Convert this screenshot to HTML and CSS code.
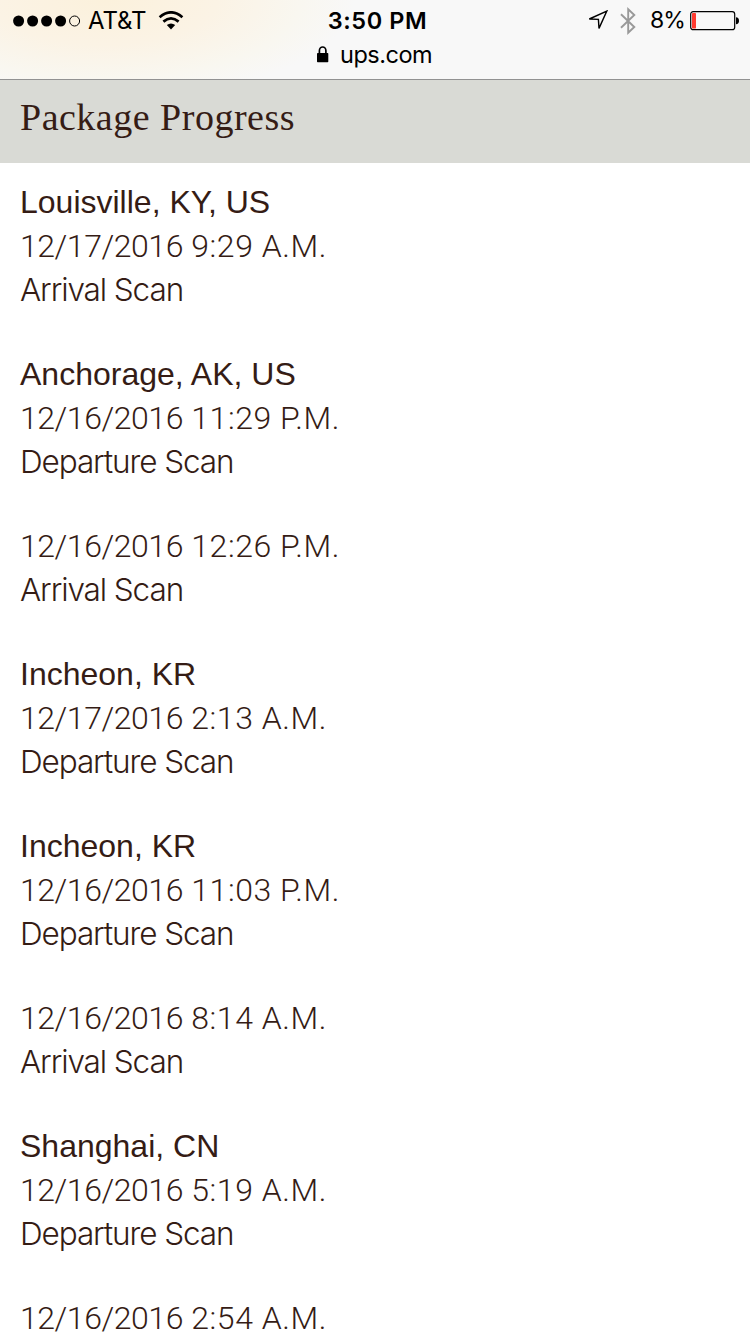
FILE: index.html
```html
<!DOCTYPE html>
<html lang="en">
<head>
<meta charset="utf-8">
<title>Package Progress</title>
<link rel="stylesheet" href="styles.css">
</head>
<body>
<header class="browser">
  <div class="status">
    <div class="carrier">
      <svg class="signal" width="68" height="12" viewBox="0 0 68 12"><circle cx="5.6" cy="6" r="5.5"/><circle cx="19.6" cy="6" r="5.5"/><circle cx="33.6" cy="6" r="5.5"/><circle cx="47.6" cy="6" r="5.5"/><circle cx="61.6" cy="6" r="5" fill="none" stroke="#000"/></svg>
      <span class="network">AT&amp;T</span>
      <svg class="wifi" width="26" height="19" viewBox="0 0 26 19"><g fill="none" stroke="#000" stroke-width="2.7"><path d="M1.6 6.2Q13-3.5 24.4 6.2"/><path d="M5.4 10.6Q13 4.2 20.6 10.6"/></g><path d="M8.8 14.1Q13 10.8 17.2 14.1L13 18.4Z"/></svg>
    </div>
    <div class="time">3:50 PM</div>
    <div class="indicators">
      <svg class="location" width="21" height="21" viewBox="0 0 21 21"><path d="M1.3 9L18.8 1.1L11 18.4L10.4 9.4Z" fill="none" stroke="#000" stroke-width="1.4"/></svg>
      <svg class="bluetooth" width="17" height="28" viewBox="0 0 17 28"><path d="M1 7.2L14.3 20L8.2 25.7V2.3L14.3 8L1 20.8" fill="none" stroke="#999" stroke-width="1.9"/></svg>
      <span class="percent">8%</span>
      <svg class="battery" width="50" height="20" viewBox="0 0 50 20"><rect x=".7" y=".7" width="44" height="18" rx="2.5" fill="none" stroke="#000" stroke-width="1.2"/><rect x="2" y="2" width="4" height="15.4" rx=".7" fill="#ff3b30"/><path d="M46 6.2Q49 6.4 49 9.7T46 13.2Z"/></svg>
    </div>
  </div>
  <div class="address">
    <svg class="lock" width="12" height="17" viewBox="0 0 12 17"><rect x="0" y="7" width="11.3" height="9.3" rx=".7"/><path d="M2.4 8V4.7a3.25 3.7 0 0 1 6.5 0V8" fill="none" stroke="#000" stroke-width="1.7"/></svg>
    <span class="domain">ups.com</span>
  </div>
</header>
<h1 class="title"><span>Package Progress</span></h1>
<main class="progress">
  <section class="scan"><h2 class="place">Louisville, KY, US</h2><p class="date"><span class="day">12/17/2016</span> 9:29 A.M.</p><p class="event">Arrival Scan</p></section>
  <section class="scan"><h2 class="place">Anchorage, AK, US</h2><p class="date"><span class="day">12/16/2016</span> 11:29 P.M.</p><p class="event">Departure Scan</p></section>
  <section class="scan"><p class="date"><span class="day">12/16/2016</span> 12:26 P.M.</p><p class="event">Arrival Scan</p></section>
  <section class="scan"><h2 class="place">Incheon, KR</h2><p class="date"><span class="day">12/17/2016</span> 2:13 A.M.</p><p class="event">Departure Scan</p></section>
  <section class="scan"><h2 class="place">Incheon, KR</h2><p class="date"><span class="day">12/16/2016</span> 11:03 P.M.</p><p class="event">Departure Scan</p></section>
  <section class="scan"><p class="date"><span class="day">12/16/2016</span> 8:14 A.M.</p><p class="event">Arrival Scan</p></section>
  <section class="scan"><h2 class="place">Shanghai, CN</h2><p class="date"><span class="day">12/16/2016</span> 5:19 A.M.</p><p class="event">Departure Scan</p></section>
  <section class="scan last"><p class="date"><span class="day">12/16/2016</span> 2:54 A.M.</p></section>
</main>
</body>
</html>
```
FILE: styles.css
```css
* { box-sizing: border-box; }
html, body { height: 1334px; overflow: hidden; }
body { margin: 0; background: #fff; color: #351c15; font-family: Inter, "Liberation Sans", sans-serif; }
h1, h2, p { margin: 0; font-weight: 400; white-space: nowrap; }
svg { display: block; flex: none; }
.browser {
  height: 80px;
  border-bottom: 1px solid #929292;
  background: radial-gradient(ellipse 250px 100px at 105px 0, #fbf1dc 0%, #fbf3e5 45%, #f9f7f0 78%, #f8f8f8 100%);
  color: #000;
}
.status { display: grid; grid-template-columns: 250px 1fr 250px; height: 41px; align-items: center; }
.carrier { display: flex; align-items: center; padding-left: 13px; }
.network { margin-left: 7px; font-size: 24px; line-height: 40px; width: 59px; letter-spacing: -0.1px; }
.wifi { margin-left: 11px; margin-top: -1px; }
.time { text-align: center; font-size: 23.5px; font-weight: 600; letter-spacing: 0.6px; line-height: 41px; padding-left: 5px; }
.indicators { display: flex; align-items: center; justify-content: flex-end; padding-right: 10px; }
.bluetooth { margin-left: 11px; }
.percent { margin-left: 13px; font-size: 23px; line-height: 41px; width: 36px; letter-spacing: -1px; }
.battery { margin-left: 4px; }
.address { display: flex; align-items: center; height: 28px; padding-left: 317px; }
.domain { margin-left: 11px; font-size: 23.5px; line-height: 28px; letter-spacing: -0.5px; }
.lock { margin-top: -1px; }
.title { height: 83px; padding: 14px 20px 0; background: #d9dad5; font: 400 38px/46px "Liberation Serif", serif; letter-spacing: 0.5px; }
.progress { display: flex; flex-direction: column; gap: 40px; padding: 17px 20px 0; font-size: 32px; line-height: 44px; }
.place { font: 400 32px/44px "Liberation Sans", sans-serif; }
.date { font-family: Roboto, sans-serif; font-weight: 300; letter-spacing: 0.55px; }
.day { letter-spacing: -0.45px; }
.event { font-size: 31.5px; font-weight: 300; letter-spacing: -1.1px; }
.last { padding-top: 6px; line-height: 32px; }
```
